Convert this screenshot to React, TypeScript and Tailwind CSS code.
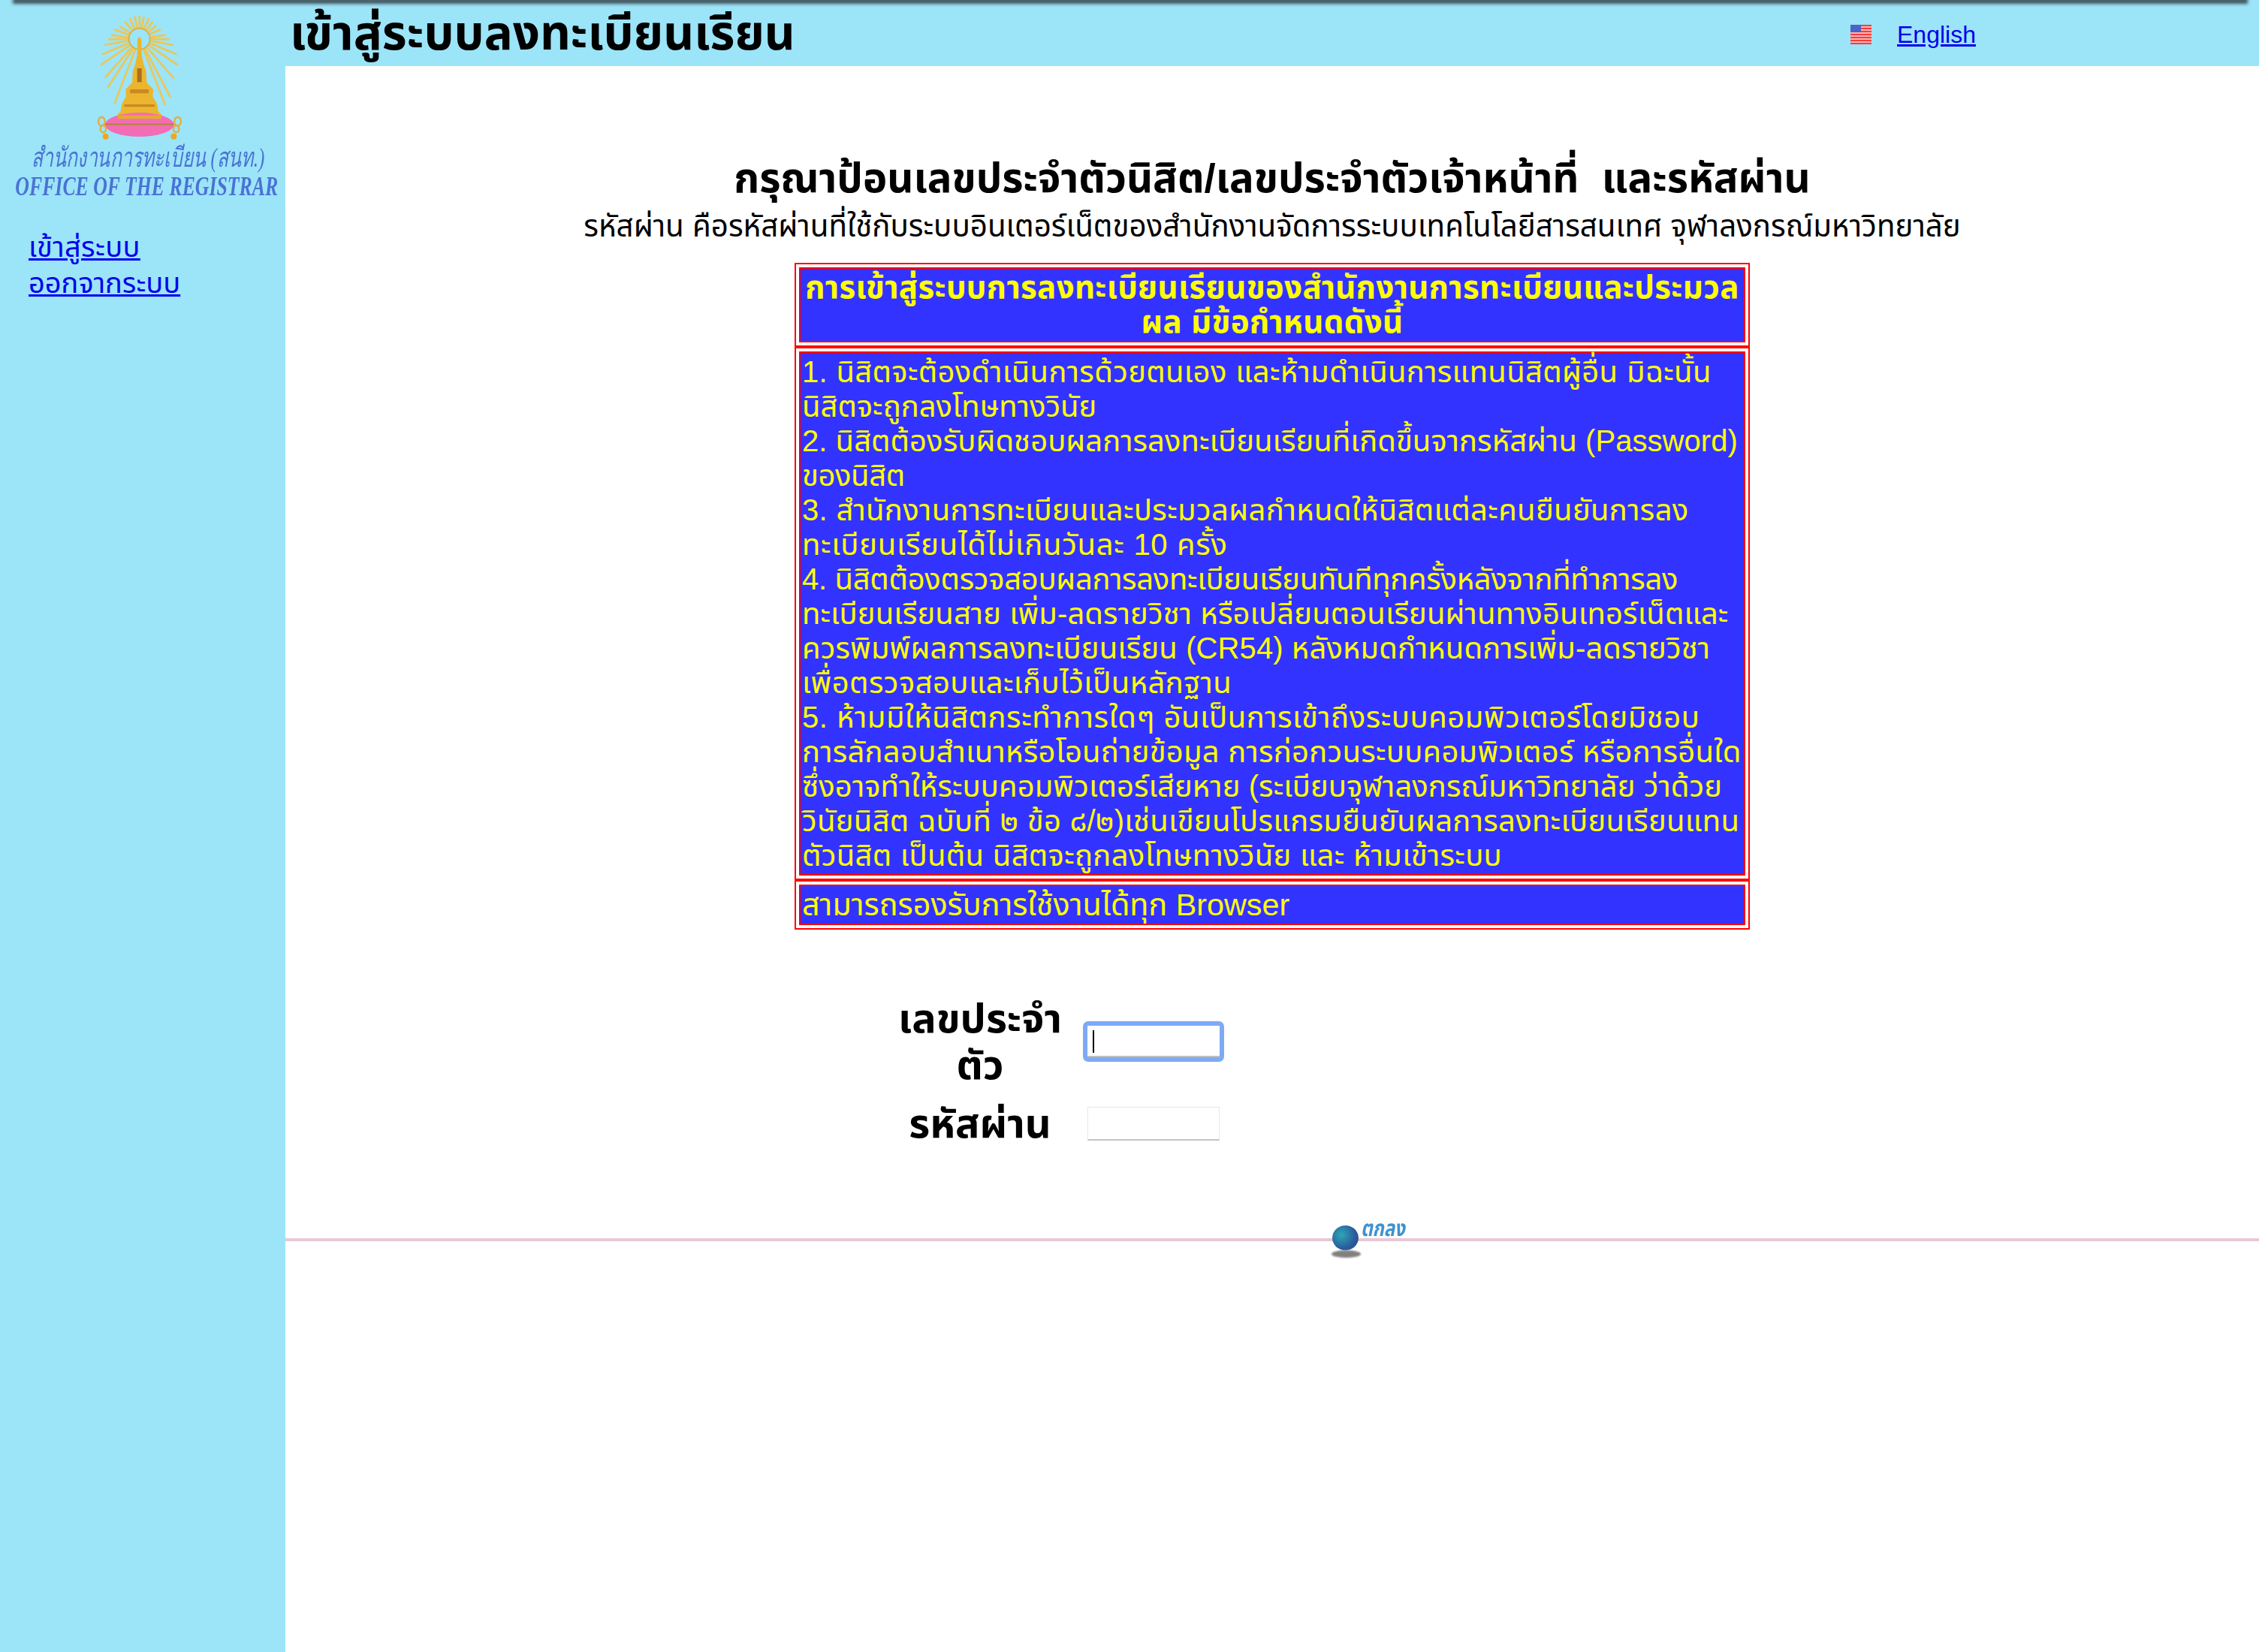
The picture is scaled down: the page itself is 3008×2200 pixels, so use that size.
const THAI = "font-['Liberation_Sans','Noto_Sans_Thai','Noto_Sans',sans-serif]";

// lines are fixed here, the reference wraps them at these points
const rules = [
  { text: "1. นิสิตจะต้องดำเนินการด้วยตนเอง และห้ามดำเนินการแทนนิสิตผู้อื่น มิฉะนั้น", cls: "tracking-[0.33px]" },
  { text: "นิสิตจะถูกลงโทษทางวินัย", cls: "tracking-[0px]" },
  { text: "2. นิสิตต้องรับผิดชอบผลการลงทะเบียนเรียนที่เกิดขึ้นจากรหัสผ่าน (Password)", cls: "tracking-[0.05px]" },
  { text: "ของนิสิต", cls: "tracking-[-0.4px]" },
  { text: "3. สำนักงานการทะเบียนและประมวลผลกำหนดให้นิสิตแต่ละคนยืนยันการลง", cls: "tracking-[0.35px]" },
  { text: "ทะเบียนเรียนได้ไม่เกินวันละ 10 ครั้ง", cls: "tracking-[0.7px]" },
  { text: "4. นิสิตต้องตรวจสอบผลการลงทะเบียนเรียนทันทีทุกครั้งหลังจากที่ทำการลง", cls: "tracking-[-0.3px]" },
  { text: "ทะเบียนเรียนสาย เพิ่ม-ลดรายวิชา หรือเปลี่ยนตอนเรียนผ่านทางอินเทอร์เน็ตและ", cls: "tracking-[0.1px]" },
  { text: "ควรพิมพ์ผลการลงทะเบียนเรียน (CR54) หลังหมดกำหนดการเพิ่ม-ลดรายวิชา", cls: "tracking-[0.1px]" },
  { text: "เพื่อตรวจสอบและเก็บไว้เป็นหลักฐาน", cls: "tracking-[0.42px]" },
  { text: "5. ห้ามมิให้นิสิตกระทำการใดๆ อันเป็นการเข้าถึงระบบคอมพิวเตอร์โดยมิชอบ", cls: "tracking-[0.53px]" },
  { text: "การลักลอบสำเนาหรือโอนถ่ายข้อมูล การก่อกวนระบบคอมพิวเตอร์ หรือการอื่นใด", cls: "tracking-[0.25px]" },
  { text: "ซึ่งอาจทำให้ระบบคอมพิวเตอร์เสียหาย (ระเบียบจุฬาลงกรณ์มหาวิทยาลัย ว่าด้วย", cls: "tracking-[0.07px]" },
  { text: "วินัยนิสิต ฉบับที่ ๒ ข้อ ๘/๒)เช่นเขียนโปรแกรมยืนยันผลการลงทะเบียนเรียนแทน", cls: "tracking-[0.3px]" },
  { text: "ตัวนิสิต เป็นต้น นิสิตจะถูกลงโทษทางวินัย และ ห้ามเข้าระบบ", cls: "tracking-[0.3px]" },
];

// ray tips read off the crest, in a 405x540 box
const rayTips = [
  [178, 20], [197, 18], [215, 22], [235, 28], [250, 42], [264, 58], [282, 72], [300, 95], [316, 112], [332, 135],
  [346, 172], [350, 215], [336, 270], [322, 345], [300, 375],
  [158, 28], [138, 40], [118, 60], [96, 72], [84, 95], [72, 112], [58, 135], [48, 172], [42, 215], [60, 265],
  [70, 305], [97, 370],
];

function Logo() {
  const cx = 197;
  const cy = 110;
  return (
    <svg width="135" height="180" viewBox="0 0 405 540" className="block blur-[0.6px]">
      {rayTips.map(([x, y]) => {
        const d = Math.hypot(x - cx, y - cy);
        const start = 44 / d;
        return (
          <line
            key={`${x}-${y}`}
            x1={cx + (x - cx) * start}
            y1={cy + (y - cy) * start}
            x2={x}
            y2={y}
            stroke="#ebc757"
            strokeWidth="8"
          />
        );
      })}
      <circle cx={cx} cy={cy} r="42" fill="none" stroke="#d9ad3e" strokeWidth="5" />
      <path
        d="M197 102 L205 112 L206 175 L214 212 L224 240 L226 285 L252 312 L250 340 L268 372 L272 400 L288 416 L106 416 L122 400 L126 372 L144 340 L142 312 L168 285 L170 240 L180 212 L188 175 L189 112 Z"
        fill="#ecb52e"
      />
      <path d="M188 228 h18 v55 h-18 z" fill="#a8701e" />
      <path d="M160 312 h74 v16 h-74 z M136 372 h122 v10 h-122 z" fill="#c98a22" />
      <ellipse cx="197" cy="453" rx="138" ry="48" fill="#f26db5" />
      <path d="M110 416 h174 v14 h-174 z" fill="#e8ab2c" />
      <rect x="60" y="448" width="275" height="7" fill="#b9843a" />
      <g fill="none" stroke="#e4ad38" strokeWidth="7">
        <ellipse cx="46" cy="440" rx="13" ry="17" />
        <ellipse cx="52" cy="470" rx="11" ry="14" />
        <ellipse cx="350" cy="440" rx="13" ry="17" />
        <ellipse cx="344" cy="470" rx="11" ry="14" />
      </g>
      <circle cx="62" cy="500" r="12" fill="#e8a92a" />
      <circle cx="334" cy="500" r="12" fill="#e8a92a" />
    </svg>
  );
}

function Flag() {
  return (
    <svg width="28" height="26" viewBox="0 0 28 26" className="block">
      <rect width="28" height="26" fill="#ffb4b4" />
      {[0, 4, 8, 12, 16, 20, 24].map((y) => (
        <rect key={y} y={y} width="28" height="2" fill="#f83c3c" />
      ))}
      <rect width="14" height="10" fill="#4a63c8" />
    </svg>
  );
}

function Box({ children, className }: { children: React.ReactNode; className: string }) {
  return (
    <div className="w-[1272px] border-2 border-[#ff0000] bg-white p-[4px]">
      <div className={`whitespace-nowrap border-2 border-[#ff0000] bg-[#3333ff] px-[2px] py-[2px] text-[#ffff00] leading-[46px] ${className}`}>
        {children}
      </div>
    </div>
  );
}

export default function App() {
  return (
    <div className={`relative flex min-h-[2200px] w-[3008px] bg-white text-black ${THAI}`}>
      <div className="absolute left-[17px] top-[-2px] z-10 h-[7px] w-[2976px] bg-[#3d4f58] blur-[2px]" />

      <aside className="w-[380px] shrink-0 bg-[#9ce4f8] pt-[15px]">
        <div className="pl-[120px]">
          <Logo />
        </div>
        <div className="flex flex-col items-center pl-[10px] font-['Liberation_Serif',serif] text-[36px] font-bold italic leading-[38px] text-[#4a72d4] blur-[0.6px]">
          <div className="mt-[-4px] ml-[4px] origin-center scale-x-[0.69] whitespace-nowrap font-normal">สำนักงานการทะเบียน (สนท.)</div>
          <div className="origin-center scale-x-[0.716] whitespace-nowrap">OFFICE OF THE REGISTRAR</div>
        </div>
        <nav className="mt-[38px] flex flex-col items-start pl-[38px] text-[38px] leading-[48px]">
          <a href="#" className="tracking-[0.35px] text-[#0000ee] underline decoration-[3px]">เข้าสู่ระบบ</a>
          <a href="#" className="text-[#0000ee] underline decoration-[3px]">ออกจากระบบ</a>
        </nav>
      </aside>

      <main className="relative min-w-0 flex-1">
        <header className="flex h-[88px] items-center bg-[#9ce4f8]">
          <h1 className="w-[2084px] pl-[6px] text-[63.4px] font-bold leading-[88px]">เข้าสู่ระบบลงทะเบียนเรียน</h1>
          <div className="flex items-center pt-[4px]">
            <Flag />
            <a href="#" className="ml-[34px] text-[32px] text-[#0000ee] underline">English</a>
          </div>
        </header>

        <div className="flex flex-col items-center pt-[114px]">
          <h2 className="whitespace-nowrap text-center text-[54.5px] font-bold leading-[72px]">กรุณาป้อนเลขประจำตัวนิสิต/เลขประจำตัวเจ้าหน้าที่&nbsp;&nbsp;และรหัสผ่าน</h2>
          <p className="mt-[4px] whitespace-nowrap text-center text-[40.3px] leading-[48px]">รหัสผ่าน คือรหัสผ่านที่ใช้กับระบบอินเตอร์เน็ตของสำนักงานจัดการระบบเทคโนโลยีสารสนเทศ จุฬาลงกรณ์มหาวิทยาลัย</p>

          <div className="mt-[24px] flex flex-col">
            <Box className="text-center text-[42px] font-bold tracking-[0.35px]">
              การเข้าสู่ระบบการลงทะเบียนเรียนของสำนักงานการทะเบียนและประมวล
              <br />
              ผล มีข้อกำหนดดังนี้
            </Box>
            <Box className="text-[40px]">
              {rules.map((r) => (
                <div key={r.text} className={r.cls}>{r.text}</div>
              ))}
            </Box>
            <Box className="text-[41.3px]">สามารถรองรับการใช้งานได้ทุก Browser</Box>
          </div>

          <div className="mt-[87px] grid w-[1018px] grid-cols-[240px_1fr] items-center gap-x-[23px] gap-y-[16px] text-center text-[54px] font-bold leading-[62px]">
            <div>
              เลขประจำ
              <br />
              ตัว
            </div>
            <div className="relative text-left">
              <input autoFocus className="block h-[42px] w-[176px] rounded-[1px] border-b-2 border-[#c0c0c0] bg-white px-[4px] caret-transparent outline-[6px] outline-[#7eaaf5]" />
              <span className="absolute left-[7px] top-1/2 h-[30px] w-[2px] -translate-y-1/2 bg-black" />
            </div>
            <div>รหัสผ่าน</div>
            <div className="text-left">
              <input type="password" className="block h-[45px] w-[176px] border border-[#e8e8e8] border-b-2 border-b-[#c4c4c4] bg-white" />
            </div>
          </div>
        </div>

        <div className="absolute left-0 right-0 top-[1649px] h-[4px] bg-[#e8c8d8]" />
        <div className="absolute left-[1393px] top-[1625px]">
          <div className="ml-[1px] mt-[7px] h-[33px] w-[35px] rounded-[50%] bg-[radial-gradient(circle_at_35%_38%,#2fa6b4,#2a5a9c_60%,#2c4a8c)]" />
          <div className="h-[10px] w-[39px] rounded-[50%] bg-[#808080] blur-[1px]" />
          <span className="absolute left-[39px] top-[-4px] origin-left scale-x-[0.8] whitespace-nowrap text-[30px] font-bold italic leading-[30px] text-[#3e92d0]">ตกลง</span>
        </div>
      </main>
    </div>
  );
}
